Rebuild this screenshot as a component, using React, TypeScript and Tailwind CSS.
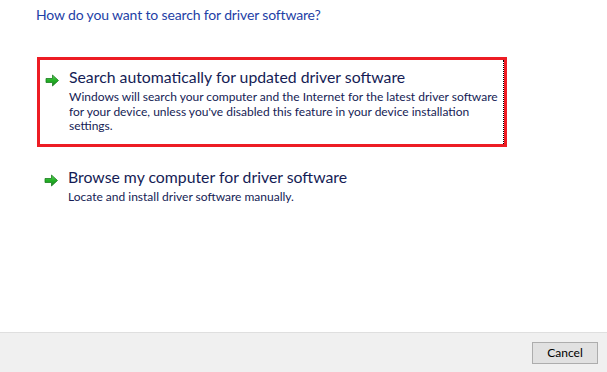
import { ReactNode } from 'react'

function GreenArrow() {
  return (
    <svg width="15" height="13" viewBox="0 0 15 13" className="shrink-0">
      <defs>
        <linearGradient id="ga" x1="0" y1="0" x2="0" y2="1">
          <stop offset="0" stopColor="#5fd35a" />
          <stop offset="0.5" stopColor="#23b026" />
          <stop offset="1" stopColor="#17851b" />
        </linearGradient>
      </defs>
      <path d="M1 4.5 H7.5 V1 L13.5 6.5 L7.5 12 V8.5 H1 Z" fill="url(#ga)" stroke="#1b7d1f" strokeWidth="0.8" strokeLinejoin="round" />
    </svg>
  )
}

function Option({ title, children }: { title: string; children: ReactNode }) {
  return (
    <div className="flex items-start gap-[9px]">
      <div className="pt-[7px]">
        <GreenArrow />
      </div>
      <div className="text-[#151c55]">
        <div className="text-[15.8px] leading-[20px]">{title}</div>
        <div className="text-[12px] leading-[14.5px] mt-[3px]">{children}</div>
      </div>
    </div>
  )
}

export default function App() {
  return (
    <div
      className="w-[607px] h-[372px] bg-white flex flex-col"
      style={{ fontFamily: 'Lato, "Liberation Sans", sans-serif' }}
    >
      <div className="flex-1 pl-[36px] pt-[5px]">
        <h1 className="text-[14px] tracking-[-0.15px] leading-[20px] text-[#1e3fa6]">
          How do you want to search for driver software?
        </h1>

        <div className="mt-[32px] ml-[1px] w-[470px] h-[90px] border-[3px] border-[#ed1c24]">
          <div className="h-full border-r border-dotted border-black pl-[5px] pt-[7px] pr-[3px]">
            <Option title="Search automatically for updated driver software">
              Windows will search your computer and the Internet for the latest driver software
              for your device, unless you've disabled this feature in your device installation
              settings.
            </Option>
          </div>
        </div>

        <div className="mt-[20px] pl-[8px]">
          <Option title="Browse my computer for driver software">
            Locate and install driver software manually.
          </Option>
        </div>
      </div>

      <div className="h-[40px] bg-[#f0f0f0] border-t border-[#dfdfdf] flex items-start justify-end pr-[9px] pt-[9px]">
        <button className="w-[66px] h-[22px] bg-[#e1e1e1] border border-[#adadad] text-[12px] text-black leading-none">
          Cancel
        </button>
      </div>
    </div>
  )
}
